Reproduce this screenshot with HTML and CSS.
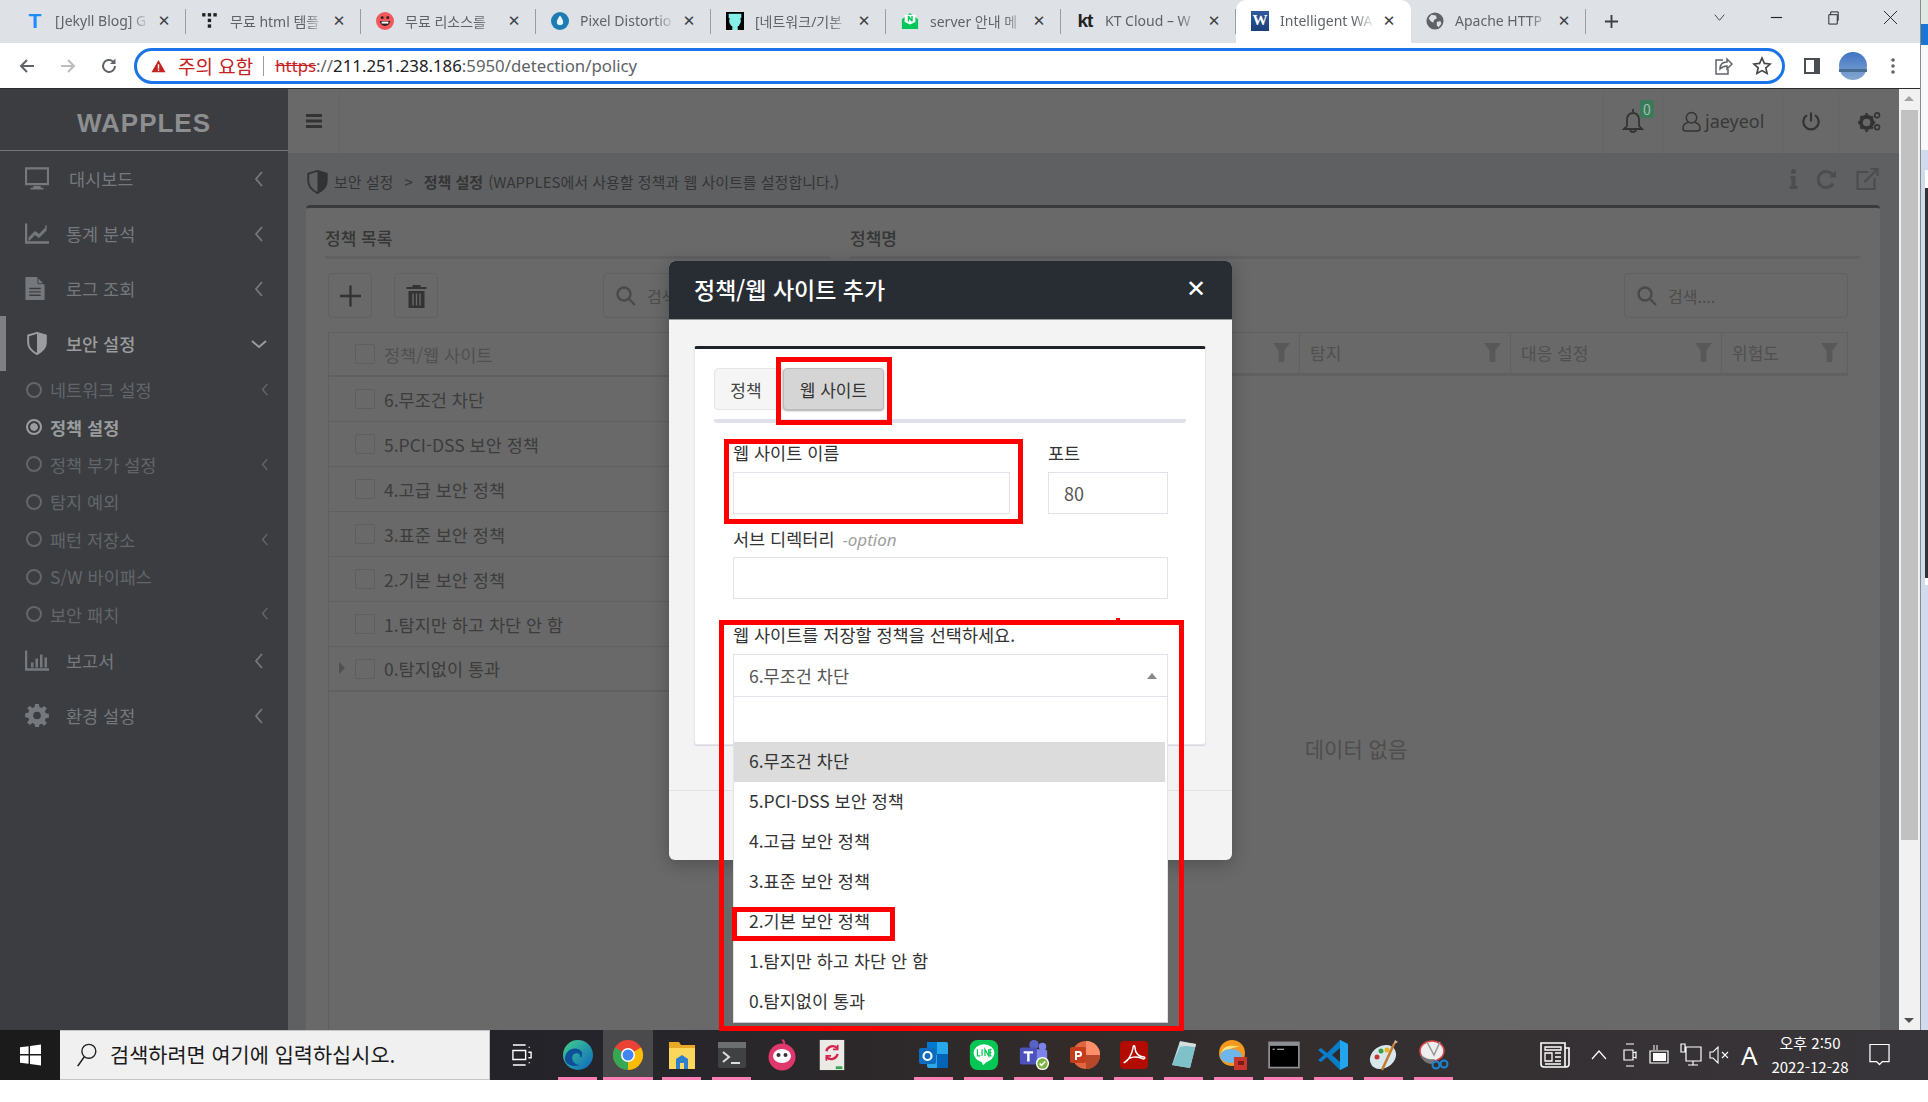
FILE: index.html
```html
<!DOCTYPE html>
<html lang="ko">
<head>
<meta charset="utf-8">
<title>WAPPLES</title>
<link rel="stylesheet" href="styles.css">
</head>
<body>
<div class="screen">
  <div class="desktop">
    <div class="browser">
      <div class="tabstrip">
        <div class="tab sep"><span class="fav fav-t">T</span><span class="tab-title">[Jekyll Blog] G</span><span class="tab-x">✕</span></div>
        <div class="tab sep"><svg class="fav" viewBox="0 0 16 16"><g fill="#222"><rect x="1" y="1" width="3" height="3"/><rect x="6" y="1" width="3" height="3"/><rect x="11" y="1" width="3" height="3"/><rect x="6" y="6" width="3" height="3"/><rect x="6" y="11" width="3" height="3"/></g></svg><span class="tab-title">무료 html 템플</span><span class="tab-x">✕</span></div>
        <div class="tab sep"><svg class="fav" viewBox="0 0 16 16"><circle cx="8" cy="8" r="8" fill="#f2585b"/><circle cx="5.500" cy="5" r="1.300" fill="#2a2020"/><circle cx="10.500" cy="5" r="1.300" fill="#2a2020"/><path d="M3.500 8h9a4.500 4.500 0 0 1-9 0z" fill="#2a2020"/><path d="M5 8.500h6v1.800H5z" fill="#fff"/></svg><span class="tab-title">무료 리소스를</span><span class="tab-x">✕</span></div>
        <div class="tab sep"><svg class="fav" viewBox="0 0 20 20"><circle cx="10" cy="10" r="10" fill="#1f7cb3"/><path d="M10 4c2 3 3.500 5 3.500 7a3.500 3.500 0 0 1-7 0c0-2 1.500-4 3.500-7z" fill="#e8f4fb"/></svg><span class="tab-title">Pixel Distortio</span><span class="tab-x">✕</span></div>
        <div class="tab sep"><svg class="fav" viewBox="0 0 20 20"><rect width="20" height="20" fill="#000"/><circle cx="10" cy="10" r="6.500" fill="#86f0e8"/><rect x="3" y="2" width="14" height="5" fill="#86f0e8"/><rect x="7" y="15" width="6" height="5" fill="#86f0e8"/></svg><span class="tab-title">[네트워크/기본</span><span class="tab-x">✕</span></div>
        <div class="tab sep"><svg class="fav" viewBox="0 0 20 20"><path d="M1 8 10 1l9 7v11H1z" fill="#03c75a"/><path d="M4 3h12v8l-6 3-6-3z" fill="#fff"/><path d="M7.500 4.500h1.500l2.500 3v-3h1.500v6h-1.500l-2.500-3v3h-1.500z" fill="#03c75a"/></svg><span class="tab-title">server 안내 메</span><span class="tab-x">✕</span></div>
        <div class="tab sep"><span class="fav fav-kt">kt</span><span class="tab-title">KT Cloud – W</span><span class="tab-x">✕</span></div>
        <div class="tab active"><span class="fav fav-w">W</span><span class="tab-title">Intelligent WA</span><span class="tab-x">✕</span></div>
        <div class="tab sep"><svg class="fav" viewBox="0 0 20 20"><circle cx="10" cy="10" r="9.500" fill="#5f6368"/><path d="M6 3l5 1 1 3-3 2-1 3-3-2-2-3zM12 11l4-1 1 3-3 4-2-2z" fill="#dee1e6"/></svg><span class="tab-title">Apache HTTP</span><span class="tab-x">✕</span></div>
        <svg class="newtab" viewBox="0 0 16 16"><path d="M8 1v14M1 8h14" stroke="#3c4043" stroke-width="2"/></svg>
        <div class="winctl">
          <svg viewBox="0 0 16 16"><path d="M3 5l5 6 5-6" fill="none" stroke="#3c4043"/></svg>
          <svg viewBox="0 0 16 16"><path d="M2 8h12" stroke="#222" stroke-width="1.200"/></svg>
          <svg viewBox="0 0 16 16"><path d="M3 5h9v10H3zM5 5V2h8v9h-1" fill="none" stroke="#222"/></svg>
          <svg viewBox="0 0 16 16"><path d="M1 1l14 14M15 1 1 15" stroke="#222"/></svg>
        </div>
      </div>
      <div class="toolbar">
        <svg class="tb-ico" viewBox="0 0 18 18"><path d="M16 9H3M9 3 3 9l6 6" fill="none" stroke="#5f6368" stroke-width="2"/></svg>
        <svg class="tb-ico" viewBox="0 0 18 18"><path d="M2 9h13M9 3l6 6-6 6" fill="none" stroke="#bdbdbd" stroke-width="2"/></svg>
        <svg class="tb-ico" viewBox="0 0 18 18"><path d="M15 9a6 6 0 1 1-2-4.500" fill="none" stroke="#5f6368" stroke-width="2"/><path d="M15.500 1.500v5.500H10z" fill="#5f6368"/></svg>
        <div class="omnibox">
          <svg class="warn" viewBox="0 0 16 16"><path d="M8 1 16 15H0z" fill="#c5221f"/><path d="M7.200 6h1.600v5H7.200zM7.200 12h1.600v1.600H7.200z" fill="#fff"/></svg>
          <span class="warn-text">주의 요함</span>
          <span class="url"><s class="url-https">https</s><span class="url-slash">://</span><span class="url-host">211.251.238.186</span>:5950/detection/policy</span>
          <svg class="omni-ico omni-share" viewBox="0 0 20 20"><path d="M10 4H3v14h12v-5" fill="none" stroke="#5f6368" stroke-width="1.500"/><path d="M7 13c0-5 3-7 7-7V3l5 5-5 5v-3c-3 0-5 1-7 3z" fill="none" stroke="#5f6368" stroke-width="1.500"/></svg>
          <svg class="omni-ico" viewBox="0 0 20 20"><path d="M10 2l2.400 5.400 5.800.6-4.400 3.800 1.300 5.700L10 14.600l-5.100 2.900 1.300-5.700L1.800 8l5.800-.6z" fill="none" stroke="#444" stroke-width="1.600"/></svg>
        </div>
        <svg class="tb-panel" viewBox="0 0 18 18"><path d="M2 2h14v14H2z" fill="none" stroke="#4a4d52" stroke-width="2"/><path d="M11 2h5v14h-5z" fill="#4a4d52"/></svg>
        <svg class="tb-avatar" viewBox="0 0 28 28"><defs><linearGradient id="sky" x1="0" y1="0" x2="0" y2="1"><stop offset="0" stop-color="#3f74c4"/><stop offset="1" stop-color="#86a8d0"/></linearGradient></defs><circle cx="14" cy="14" r="14" fill="url(#sky)"/><path d="M0 17h28v3H0z" fill="#4a6d96"/></svg>
        <svg class="tb-dots" viewBox="0 0 6 18"><circle cx="3" cy="3" r="1.800" fill="#5f6368"/><circle cx="3" cy="9" r="1.800" fill="#5f6368"/><circle cx="3" cy="15" r="1.800" fill="#5f6368"/></svg>
      </div>
      <div class="page">
        <aside class="sidebar">
          <div class="logo">WAPPLES</div>
          <nav class="menu">
            <div class="mi"><svg class="mi-ico" viewBox="0 0 26 24"><path d="M1 1h24v17H1z" fill="none" stroke="#75797d" stroke-width="2.500"/><path d="M9 20h8v2h3v2H6v-2h3z" fill="#75797d"/></svg><span class="mi-text mi-text-wide">대시보드</span><svg class="chev"><use href="#chev-l"/></svg></div>
            <div class="mi"><svg class="mi-ico" viewBox="0 0 24 20"><path d="M1 0v19h23" fill="none" stroke="#75797d" stroke-width="2.500"/><path d="M4 14l6-6 4 3 7-7v-2 5l-7 7-4-3-6 6z" fill="#75797d" stroke="#75797d"/></svg><span class="mi-text">통계 분석</span><svg class="chev"><use href="#chev-l"/></svg></div>
            <div class="mi"><svg class="mi-ico mi-doc" viewBox="0 0 20 24"><path d="M0 0h12l8 8v16H0z" fill="#75797d"/><path d="M4 12h12M4 15.500h12M4 19h12" stroke="#3c3d40" stroke-width="1.400"/><path d="M13 0v7h7" fill="none" stroke="#3c3d40"/></svg><span class="mi-text">로그 조회</span><svg class="chev"><use href="#chev-l"/></svg></div>
            <div class="mi mi-open"><svg class="mi-ico" viewBox="0 0 24 26"><path d="M12 1l10 3v8c0 6-4 10-10 13C6 22 2 18 2 12V4z" fill="none" stroke="#9a9c9e" stroke-width="2.200"/><path d="M12 1l10 3v8c0 6-4 10-10 13z" fill="#9a9c9e"/></svg><span class="mi-text">보안 설정</span><svg class="chev chev-down"><use href="#chev-d"/></svg></div>
            <div class="sub"><i class="dot"></i><span class="sub-text">네트워크 설정</span><svg class="chev-s"><use href="#chev-l"/></svg></div>
            <div class="sub sub-on"><i class="dot"></i><span class="sub-text">정책 설정</span></div>
            <div class="sub"><i class="dot"></i><span class="sub-text">정책 부가 설정</span><svg class="chev-s"><use href="#chev-l"/></svg></div>
            <div class="sub"><i class="dot"></i><span class="sub-text">탐지 예외</span></div>
            <div class="sub"><i class="dot"></i><span class="sub-text">패턴 저장소</span><svg class="chev-s"><use href="#chev-l"/></svg></div>
            <div class="sub"><i class="dot"></i><span class="sub-text">S/W 바이패스</span></div>
            <div class="sub"><i class="dot"></i><span class="sub-text">보안 패치</span><svg class="chev-s"><use href="#chev-l"/></svg></div>
            <div class="mi"><svg class="mi-ico" viewBox="0 0 24 20"><path d="M1 0v19h23" fill="none" stroke="#75797d" stroke-width="2.500"/><path d="M6 12h2.500v5H6zM10.500 8H13v9h-2.500zM15 4h2.500v13H15zM19.500 7H22v10h-2.500z" fill="#75797d"/></svg><span class="mi-text">보고서</span><svg class="chev"><use href="#chev-l"/></svg></div>
            <div class="mi"><svg class="mi-ico" viewBox="0 0 24 24"><path d="M10 0h4l.6 3.200 2.200.9L19.500 2l2.800 2.800-2.100 2.700.9 2.200 3.300.6v4l-3.300.6-.9 2.200 2.100 2.700-2.800 2.800-2.700-2.100-2.200.9L14 24h-4l-.6-3.200-2.200-.9L4.500 22l-2.800-2.800 2.100-2.700-.9-2.200L-.4 13.700v-4l3.300-.6.9-2.200L1.700 4.300 4.500 2l2.700 2.100 2.200-.9z" fill="#75797d"/><circle cx="12" cy="12" r="4" fill="#3c3d40"/></svg><span class="mi-text">환경 설정</span><svg class="chev"><use href="#chev-l"/></svg></div>
          </nav>
        </aside>
        <div class="main">
          <header class="topnav">
            <div class="nav-cell nav-burger"><svg class="burger" viewBox="0 0 16 14"><path d="M0 0h16v3H0zM0 5.500h16v3H0zM0 11h16v3H0z" fill="#333"/></svg></div>
            <div class="nav-space"></div>
            <div class="nav-cell nav-bell"><svg class="bell" viewBox="0 0 22 26"><path d="M11 1v3M5 18V11a6 6 0 0 1 12 0v7l3 3H2zM8 21a3 3 0 0 0 6 0" fill="none" stroke="#333" stroke-width="1.800"/></svg><span class="badge">0</span></div>
            <div class="nav-cell nav-user"><svg class="user" viewBox="0 0 20 22"><circle cx="10" cy="7" r="5.500" fill="none" stroke="#333" stroke-width="1.500"/><path d="M6 12C3 13 1 15 1 18c0 2 1 3 3 3h12c2 0 3-1 3-3 0-3-2-5-5-6" fill="none" stroke="#333" stroke-width="1.500"/></svg><span class="username">jaeyeol</span></div>
            <div class="nav-cell nav-power"><svg class="power" viewBox="0 0 20 22"><path d="M10 1v10" stroke="#333" stroke-width="2.400"/><path d="M5.500 4A8.500 8.500 0 1 0 14.500 4" fill="none" stroke="#333" stroke-width="2.400"/></svg></div>
            <div class="nav-cell nav-gear"><svg class="gears" viewBox="0 0 24 22"><circle cx="9" cy="12" r="6" fill="none" stroke="#333" stroke-width="4"/><path d="M9 2v3M9 19v3M0 12h3M15 12h3M2.500 5.500l2 2M13.500 16.500l2 2M15.500 5.500l-2 2M4.500 16.500l-2 2" stroke="#333" stroke-width="2.500"/><circle cx="20" cy="4.500" r="2.500" fill="none" stroke="#333" stroke-width="1.700"/><circle cx="20" cy="17" r="2.500" fill="none" stroke="#333" stroke-width="1.700"/></svg></div>
          </header>
          <div class="content">
            <div class="crumb">
              <svg class="crumb-shield" viewBox="0 0 24 26"><path d="M12 1l10 3v8c0 6-4 10-10 13C6 22 2 18 2 12V4z" fill="none" stroke="#333" stroke-width="2"/><path d="M12 1l10 3v8c0 6-4 10-10 13z" fill="#333"/></svg>
              <span class="crumb-a">보안 설정</span><span class="crumb-gt">&gt;</span><b class="crumb-b">정책 설정</b><span class="crumb-c">(WAPPLES에서 사용할 정책과 웹 사이트를 설정합니다.)</span>
              <div class="crumb-tools">
                <svg class="crumb-i" viewBox="0 0 8 20"><circle cx="4" cy="2.500" r="2.500" fill="#4c4d4f"/><path d="M1 7h5v10h2v3H0v-3h2v-7H1z" fill="#4c4d4f"/></svg>
                <svg class="crumb-r" viewBox="0 0 20 20"><path d="M16 6a8 8 0 1 0 0 8" fill="none" stroke="#4c4d4f" stroke-width="3"/><path d="M19 1v7h-7z" fill="#4c4d4f"/></svg>
                <svg class="crumb-e" viewBox="0 0 22 22"><path d="M12 4H1v17h17V10" fill="none" stroke="#4c4d4f" stroke-width="2.200"/><path d="M8 14 20 2M14 1h7v7" fill="none" stroke="#4c4d4f" stroke-width="2.200"/></svg>
              </div>
            </div>
            <section class="card">
              <div class="col col-left">
                <h3 class="col-title">정책 목록</h3>
                <div class="tools">
                  <div class="tool-btn"><svg viewBox="0 0 24 24"><path d="M12 0v24M0 12h24" stroke="#333" stroke-width="2.600"/></svg></div>
                  <div class="tool-btn"><svg viewBox="0 0 20 24"><path d="M6 1h8v2h6v2H0V3h6zM2 7h16v17H2z" fill="#333"/><path d="M6.500 9.500v12M10 9.500v12M13.500 9.500v12" stroke="#696969" stroke-width="1.400"/></svg></div>
                  <div class="search search-left"><svg class="search-ico" viewBox="0 0 20 20"><circle cx="8" cy="8" r="6.500" fill="none" stroke="#4a4a4a" stroke-width="2.400"/><path d="m13 13 6 6" stroke="#4a4a4a" stroke-width="2.400"/></svg><span class="search-ph">검색....</span></div>
                </div>
                <div class="tree">
                  <div class="tree-row tree-head"><i class="check"></i><span class="head-text">정책/웹 사이트</span></div>
                  <div class="tree-row"><i class="check"></i><span>6.무조건 차단</span></div>
                  <div class="tree-row"><i class="check"></i><span>5.PCI-DSS 보안 정책</span></div>
                  <div class="tree-row"><i class="check"></i><span>4.고급 보안 정책</span></div>
                  <div class="tree-row"><i class="check"></i><span>3.표준 보안 정책</span></div>
                  <div class="tree-row"><i class="check"></i><span>2.기본 보안 정책</span></div>
                  <div class="tree-row"><i class="check"></i><span>1.탐지만 하고 차단 안 함</span></div>
                  <div class="tree-row tree-last"><i class="caret"></i><i class="check"></i><span>0.탐지없이 통과</span></div>
                </div>
              </div>
              <div class="col col-right">
                <h3 class="col-title">정책명</h3>
                <div class="tools tools-right">
                  <div class="search search-right"><svg class="search-ico" viewBox="0 0 20 20"><circle cx="8" cy="8" r="6.500" fill="none" stroke="#4a4a4a" stroke-width="2.400"/><path d="m13 13 6 6" stroke="#4a4a4a" stroke-width="2.400"/></svg><span class="search-ph">검색....</span></div>
                </div>
                <div class="grid-head">
                  <div class="gh gh-a"><svg class="funnel"><use href="#funnel"/></svg></div>
                  <div class="gh"><span>탐지</span><svg class="funnel"><use href="#funnel"/></svg></div>
                  <div class="gh"><span>대응 설정</span><svg class="funnel"><use href="#funnel"/></svg></div>
                  <div class="gh gh-d"><span>위험도</span><svg class="funnel"><use href="#funnel"/></svg></div>
                </div>
                <div class="grid-empty">데이터 없음</div>
              </div>
            </section>
          </div>
        </div>
        <div class="scrollbar">
          <i class="sb-up"></i>
          <div class="sb-track"><div class="sb-thumb"></div></div>
          <i class="sb-down"></i>
        </div>
      </div>
    </div>
    <div class="behind">
      <div class="b-globe"></div>
      <div class="b-blue"></div>
      <div class="b-white"></div>
      <div class="b-pale"><div class="b-panel"></div></div>
    </div>
  </div>
  <div class="taskbar">
    <div class="start"><svg viewBox="0 0 22 22"><path d="M0 3l9-1.200V10H0zM10.500 1.500 22 0v10H10.500zM0 11.500h9v8.700L0 19zM10.500 11.500H22V22l-11.500-1.600z" fill="#fff"/></svg></div>
    <div class="tb-search"><svg viewBox="0 0 24 28"><circle cx="14" cy="10" r="7.500" fill="none" stroke="#222" stroke-width="1.500"/><path d="M9 16 2 26" stroke="#222" stroke-width="1.800"/></svg><span class="tb-search-text">검색하려면 여기에 입력하십시오.</span></div>
    <div class="tk tk-view"><svg viewBox="0 0 22 24"><path d="M1 1h14M1 23h14M1 7h14v10H1zM18 9h3v6h-3M19 3v1M19 20v1" fill="none" stroke="#fff" stroke-width="1.500"/></svg></div>
    <div class="tk tk-pink"><svg viewBox="0 0 32 32"><defs><linearGradient id="edge" x1="0" y1="0" x2="1" y2="1"><stop offset="0" stop-color="#43d08b"/><stop offset="1" stop-color="#0b66c2"/></linearGradient></defs><circle cx="16" cy="16" r="15" fill="url(#edge)"/><path d="M3 20c0-9 9-13 15-9 4 3 2 8 0 7 1-3-3-5-6-3-4 3-1 11 6 11-7 3-15-1-15-6z" fill="#0e4f9a"/></svg></div>
    <div class="tk tk-on tk-pink"><svg viewBox="0 0 32 32"><circle cx="16" cy="16" r="15" fill="#ea4335"/><path d="M16 16 3 8.500A15 15 0 0 0 16 31z" fill="#34a853"/><path d="M16 16v15A15 15 0 0 0 29 8.500z" fill="#fbbc04"/><circle cx="16" cy="16" r="7" fill="#fff"/><circle cx="16" cy="16" r="5.500" fill="#4285f4"/></svg></div>
    <div class="tk tk-pink tk-files"><svg viewBox="0 0 32 32"><path d="M3 3h10l2 3h14v24H3z" fill="#e9a825"/><path d="M3 9h26v21H3z" fill="#fbd75b"/><path d="M10 30V20l6-4 6 4v10h-4v-6h-4v6z" fill="#2f7fd1"/></svg></div>
    <div class="tk tk-pink"><svg viewBox="0 0 32 32"><rect x="2" y="3" width="28" height="26" rx="2" fill="#3f4143"/><rect x="2" y="3" width="28" height="6" fill="#6c6e70"/><path d="m7 13 6 5-6 5" fill="none" stroke="#ddd" stroke-width="2"/><path d="M15 24h9" stroke="#ddd" stroke-width="2"/></svg></div>
    <div class="tk"><svg viewBox="0 0 32 32"><path d="M16 1a3 3 0 0 1 2 4" stroke="#e8336f" stroke-width="2" fill="none"/><circle cx="16" cy="18" r="13.500" fill="#e0376c"/><ellipse cx="16" cy="17" rx="9" ry="7" fill="#fff"/><circle cx="12.500" cy="16" r="2" fill="#333"/><circle cx="19.500" cy="16" r="2" fill="#333"/></svg></div>
    <div class="tk"><svg viewBox="0 0 28 34"><rect x="1" y="1" width="26" height="32" fill="#eceae4"/><path d="M8 13a7 7 0 0 1 12-3M20 16a7 7 0 0 1-12 3" fill="none" stroke="#d3244f" stroke-width="2.500"/><path d="M20 6v5h-5M8 23v-5h5" fill="none" stroke="#d3244f" stroke-width="1.800"/><rect x="18" y="29" width="7" height="3" fill="#3aa655"/></svg></div>
    <div class="tk tk-gap"></div>
    <div class="tk tk-pink"><svg viewBox="0 0 32 32"><rect x="9" y="3" width="21" height="26" rx="2" fill="#28a8ea"/><rect x="9" y="3" width="10" height="13" fill="#0078d4"/><rect x="19" y="15" width="11" height="14" fill="#0364b8"/><rect x="1" y="9" width="17" height="16" rx="2" fill="#0f6cbd"/><circle cx="9.500" cy="17" r="4" fill="none" stroke="#fff" stroke-width="2.200"/></svg></div>
    <div class="tk tk-pink"><svg viewBox="0 0 32 34"><rect x="1" y="1" width="30" height="32" rx="8" fill="#06c755"/><ellipse cx="16" cy="15" rx="11" ry="9.500" fill="#fff"/><path d="M13 23l2 5 5-5z" fill="#fff"/><path d="M9 11v7h3M14 11v7M17 18v-7l4 7v-7M24 11h-1.500v7H24M22.500 14.500H24" fill="none" stroke="#06c755" stroke-width="1.300"/></svg></div>
    <div class="tk tk-pink"><svg viewBox="0 0 32 34"><circle cx="25" cy="8" r="4" fill="#7b83eb"/><circle cx="16" cy="6" r="5" fill="#5a62c3"/><rect x="13" y="11" width="17" height="15" rx="3" fill="#7b83eb"/><rect x="1" y="9" width="18" height="18" rx="2" fill="#4b53bc"/><path d="M5 13h10v2.500h-3.700V24H8.700v-8.500H5z" fill="#fff"/><circle cx="25" cy="26" r="7" fill="#fff"/><circle cx="25" cy="26" r="5.500" fill="#7cb342"/><path d="m22 26 2 2 4-4" fill="none" stroke="#fff" stroke-width="1.600"/></svg></div>
    <div class="tk tk-pink"><svg viewBox="0 0 32 32"><circle cx="18" cy="16" r="14" fill="#e0663f"/><path d="M18 2a14 14 0 0 1 14 14H18z" fill="#ff8f6b"/><path d="M18 16h14a14 14 0 0 1-14 14z" fill="#b7472a"/><rect x="2" y="8" width="16" height="16" rx="2" fill="#c43e1c"/><path d="M7 12h4a3 3 0 0 1 0 6H9v3H7zm2 2v2h2a1 1 0 0 0 0-2z" fill="#fff"/></svg></div>
    <div class="tk tk-pink"><svg viewBox="0 0 32 32"><rect x="2" y="2" width="28" height="28" rx="4" fill="#b30b00"/><path d="M7 23c3-1 7-8 8-14 0-3 2-3 2 0 0 5 4 9 9 9 2 1 0 3-3 1-5-2-11-1-14 2-2 3-4 3-2 2z" fill="none" stroke="#fff" stroke-width="1.500"/></svg></div>
    <div class="tk tk-pink"><svg viewBox="0 0 32 32"><path d="M12 2l16 3-6 24L4 26z" fill="#b9dbe0"/><path d="M4 26 12 8l16-3-6 24z" fill="#7fc1c9"/><path d="M12 3l16 2-1 3-16-2z" fill="#ddd"/></svg></div>
    <div class="tk tk-pink"><svg viewBox="0 0 32 32"><circle cx="14" cy="14" r="13" fill="#f39a1e"/><path d="M3 14C5 7 13 5 22 8 15 8 8 10 6 18z" fill="#fde27a"/><ellipse cx="13" cy="17" rx="11" ry="7" fill="#6fb7ea"/><rect x="16" y="18" width="13" height="13" fill="#c9362e"/><rect x="20" y="22" width="6" height="4" fill="#7a1b15"/></svg></div>
    <div class="tk tk-pink"><svg viewBox="0 0 28 24"><rect x="1" y="1" width="26" height="22" fill="#000" stroke="#8d8f92" stroke-width="1.500"/><rect x="1" y="1" width="26" height="3" fill="#8d8f92"/><path d="M4 7h2M8 7h6" stroke="#ccc" stroke-width="1"/></svg></div>
    <div class="tk tk-pink"><svg viewBox="0 0 32 32"><path d="M22 1 9 14 3 9 0 11l6 5-6 5 3 2 6-5 13 13 8-4V5z" fill="#0a7dc8"/><path d="M22 1v30l8-4V5z" fill="#22a5ed"/><path d="M22 9v14l-8-7z" fill="#2d2b2e"/></svg></div>
    <div class="tk tk-pink"><svg viewBox="0 0 32 32"><ellipse cx="15" cy="18" rx="14" ry="11" fill="#d8e6ee" transform="rotate(-35 15 18)"/><circle cx="9" cy="18" r="2.500" fill="#c9362e"/><circle cx="13" cy="12" r="2.500" fill="#3c9e4b"/><circle cx="19" cy="11" r="2.500" fill="#e6b422"/><path d="M14 31 26 5" stroke="#c47a2c" stroke-width="2.500"/><path d="M25 6l2-5 3 2z" fill="#d9b48a"/></svg></div>
    <div class="tk tk-pink"><svg viewBox="0 0 32 32"><ellipse cx="14" cy="12" rx="12" ry="10" fill="#eee" stroke="#d54545" stroke-width="1.600"/><path d="M2 15c3 4 10 6 15 5l-3 5C8 25 3 20 2 15z" fill="#777"/><path d="m9 3 7 13 6-13" fill="none" stroke="#999" stroke-width="1.500"/><circle cx="18" cy="26" r="3.500" fill="none" stroke="#1a87d6" stroke-width="2"/><circle cx="26" cy="25" r="3.500" fill="none" stroke="#1a87d6" stroke-width="2"/></svg></div>
    <div class="tray">
      <svg class="t-news" viewBox="0 0 30 26"><path d="M1 1h24v24H4a3 3 0 0 1-3-3zM25 6h4v16a3 3 0 0 1-3 3h-1" fill="none" stroke="#fff" stroke-width="1.600"/><path d="M5 5h16v3H5zM5 11h7v8H5zM15 11h6M15 15h6M15 19h6M5 22h16" fill="none" stroke="#fff" stroke-width="1.300"/></svg>
      <svg class="t-up" viewBox="0 0 16 10"><path d="M1 9l7-8 7 8" fill="none" stroke="#fff" stroke-width="1.200"/></svg>
      <svg class="t-cam" viewBox="0 0 14 24"><path d="M3 1h8M3 23h8M1 7h9v10H1zM10 10l3-1v6l-3-1" fill="none" stroke="#fff" stroke-width="1.200"/></svg>
      <svg class="t-bat" viewBox="0 0 20 22"><path d="M1 7h18v12H1z" fill="none" stroke="#fff" stroke-width="1.200"/><path d="M4 9h13v8H4z" fill="#fff"/><path d="M5 1v5M8 1v5" stroke="#fff"/></svg>
      <svg class="t-net" viewBox="0 0 22 24"><path d="M6 4h15v14H6zM5 1H1v8h4zM13 18v4M8 22h10" fill="none" stroke="#fff" stroke-width="1.200"/></svg>
      <svg class="t-vol" viewBox="0 0 20 20"><path d="M1 7h3l5-5v16l-5-5H1z" fill="none" stroke="#fff" stroke-width="1.100"/><path d="m13 7 6 6M19 7l-6 6" stroke="#fff" stroke-width="1.100"/></svg>
      <span class="t-ime">A</span>
      <div class="t-clock"><span>오후 2:50</span><span>2022-12-28</span></div>
      <svg class="t-note" viewBox="0 0 22 24"><path d="M1 1h20v18h-7l-3 3-3-3H1z" fill="none" stroke="#fff" stroke-width="1.300"/></svg>
    </div>
  </div>

  <div class="modal">
    <div class="modal-head"><span class="modal-title">정책/웹 사이트 추가</span><span class="modal-close">✕</span></div>
    <div class="modal-body">
      <div class="form-card">
        <div class="tabs">
          <div class="mtab">정책</div>
          <div class="mtab mtab-on">웹 사이트</div>
        </div>
        <div class="form">
          <div class="form-row">
            <div class="field field-name"><label class="lbl">웹 사이트 이름</label><div class="input"></div></div>
            <div class="field field-port"><label class="lbl">포트</label><div class="input input-val">80</div></div>
          </div>
          <div class="field"><label class="lbl lbl-tight">서브 디렉터리 <em class="opt">-option</em></label><div class="input"></div></div>
          <div class="field">
            <label class="lbl">웹 사이트를 저장할 정책을 선택하세요.</label>
            <div class="select"><span>6.무조건 차단</span><i class="sel-arrow"></i></div>
            <div class="dropdown">
              <div class="dd-search"></div>
              <div class="dd-item dd-on">6.무조건 차단</div>
              <div class="dd-item">5.PCI-DSS 보안 정책</div>
              <div class="dd-item">4.고급 보안 정책</div>
              <div class="dd-item">3.표준 보안 정책</div>
              <div class="dd-item">2.기본 보안 정책</div>
              <div class="dd-item">1.탐지만 하고 차단 안 함</div>
              <div class="dd-item">0.탐지없이 통과</div>
            </div>
          </div>
        </div>
      </div>
    </div>
    <div class="modal-foot"></div>
  </div>

  <div class="mark mark-tab"></div>
  <div class="mark mark-name"></div>
  <div class="mark mark-select"></div>
  <div class="mark mark-item"></div>
  <div class="mark-dot"></div>
</div>

<svg class="defs" aria-hidden="true">
  <symbol id="chev-l" viewBox="0 0 10 16"><path d="M8 1 2 8l6 7" fill="none" stroke="currentColor" stroke-width="1.800"/></symbol>
  <symbol id="chev-d" viewBox="0 0 16 10"><path d="M1 2l7 6 7-6" fill="none" stroke="currentColor" stroke-width="2"/></symbol>
  <symbol id="funnel" viewBox="0 0 18 20"><path d="M0 0h18l-6 8v12H6V8z" fill="#585858"/></symbol>
</svg>
</body>
</html>
```
FILE: styles.css
```css
* { box-sizing: border-box; }
html, body { margin: 0; padding: 0; background: #fff; }
body { font-family: "Noto Sans CJK KR", "Noto Sans", sans-serif; width: 1928px; height: 1102px; overflow: hidden; }
.defs { position: absolute; width: 0; height: 0; }

.screen { position: relative; width: 1928px; height: 1080px; display: flex; flex-direction: column; overflow: hidden; }
.desktop { display: flex; height: 1030px; flex: none; }
.browser { width: 1920px; display: flex; flex-direction: column; }

/* chrome tabs */
.tabstrip { height: 43px; background: #dee1e6; display: flex; align-items: center; padding-left: 11px; flex: none; }
.tab { position: relative; width: 175px; height: 43px; display: flex; align-items: center; padding: 0 0 2px 15px; font-family: "Noto Sans", "Noto Sans CJK KR", sans-serif; font-size: 14px; color: #5f6368; flex: none; }
.tab.sep::after { content: ""; position: absolute; right: 0; top: 9px; height: 25px; width: 1px; background: #9a9ea3; }
.tab.active { background: #fff; border-radius: 10px 10px 0 0; height: 43px; }
.fav { width: 18px; height: 18px; flex: none; display: flex; align-items: center; justify-content: center; }
.fav-t { color: #1a8cff; font: 700 21px "Liberation Sans", sans-serif; }
.fav-kt { color: #222; font: 700 19px "Liberation Sans", sans-serif; letter-spacing: -1px; }
.fav-w { background: linear-gradient(#2f5a9e, #1c3f78); color: #fff; font: 700 15px "Liberation Serif", serif; height: 20px; }
.tab-title { margin-left: 11px; width: 95px; overflow: hidden; white-space: nowrap; -webkit-mask-image: linear-gradient(to right, #000 78%, transparent 100%); mask-image: linear-gradient(to right, #000 78%, transparent 100%); }
.tab-x { margin-left: 6px; font: 700 15px "DejaVu Sans", sans-serif; color: #3c4043; width: 16px; text-align: center; }
.newtab { width: 15px; height: 15px; margin-left: 18px; flex: none; }
.winctl { margin-left: auto; display: flex; align-items: center; gap: 42px; padding-right: 22px; }
.winctl svg { width: 15px; height: 15px; margin-top: -8px; flex: none; }

/* chrome toolbar */
.toolbar { height: 45px; background: #fff; display: flex; align-items: center; flex: none; padding-left: 18px; }
.tb-ico { width: 18px; height: 18px; margin-right: 23px; flex: none; }
.omnibox { width: 1651px; margin-left: -7px; height: 36px; border: 3px solid #1a73e8; border-radius: 18px; display: flex; align-items: center; padding-left: 14px; flex: none; }
.warn { width: 15px; height: 14px; flex: none; }
.warn-text { color: #c5221f; font-size: 19px; margin-left: 12px; padding-right: 10px; border-right: 1px solid #9a9ea3; line-height: 20px; white-space: nowrap; }
.url { margin-left: 11px; font-family: "Noto Sans", sans-serif; font-size: 16.800px; color: #5f6368; white-space: nowrap; }
.url-https { color: #c5221f; }
.url-host { color: #202124; }
.omni-ico { width: 20px; height: 20px; margin-left: 19px; flex: none; }
.omni-share { margin-left: auto; }
.omnibox .omni-ico:last-child { margin-right: 10px; }
.tb-panel { width: 18px; height: 18px; margin-left: 18px; flex: none; }
.tb-avatar { width: 28px; height: 28px; margin-left: 18px; flex: none; }
.tb-dots { width: 6px; height: 18px; margin-left: 23px; flex: none; }

/* app page */
.page { flex: 1; display: flex; min-height: 0; border-top: 1px solid #2c2c2c; }
.sidebar { width: 288px; background: #3c3d40; flex: none; }
.logo { height: 62px; border-bottom: 1px solid #74767a; color: #8c8e90; font: 700 26px/68px "Liberation Sans", sans-serif; letter-spacing: 1px; text-align: center; }
.menu { color: #6f7377; }
.mi { height: 55px; display: flex; align-items: center; padding-left: 25px; font-size: 17.500px; position: relative; color: #75797d; }
.mi-ico { width: 24px; height: 23px; flex: none; }
.mi-doc { width: 20px; }
.mi-doc + .mi-text { margin-left: 21px; }
.mi-text { margin-left: 17px; }
.mi-text-wide { margin-left: 20px; }
.chev { width: 10px; height: 16px; position: absolute; left: 254px; top: 20px; color: #75797d; }
.chev-down { width: 16px; height: 10px; left: 251px; top: 23px; color: #9a9c9e; }
.mi-open { color: #9a9c9e; font-weight: 500; box-shadow: inset 6px 0 0 #7e8083; }
.sub { height: 37.400px; display: flex; align-items: center; padding-left: 26px; font-size: 17.500px; position: relative; color: #62666a; }
.dot { width: 16px; height: 16px; border: 2.500px solid #62666a; border-radius: 50%; flex: none; }
.sub-text { margin-left: 8px; }
.chev-s { width: 8px; height: 13px; position: absolute; left: 261px; top: 12px; color: #62666a; }
.sub-on { color: #9a9c9e; font-weight: 700; }
.sub-on .dot { border-color: #9a9c9e; background: radial-gradient(circle, #9a9c9e 0 3.500px, transparent 4px); }

.main { flex: 1; min-width: 0; display: flex; flex-direction: column; background: #5f6062; }
.topnav { height: 64px; background: #696969; display: flex; flex: none; align-items: stretch; }
.nav-cell { display: flex; align-items: center; justify-content: center; border-left: 1px solid #646464; position: relative; flex: none; }
.nav-burger { width: 52px; border-left: 0; border-right: 1px solid #646464; }
.burger { width: 16px; height: 14px; }
.nav-space { flex: 1; }
.nav-bell { width: 59px; }
.bell { width: 22px; height: 26px; }
.badge { position: absolute; left: 36px; top: 11px; width: 14px; height: 18px; background: #3a7a5a; color: #9fc0ae; font-size: 14px; line-height: 18px; text-align: center; border-radius: 2px; }
.nav-user { width: 120px; justify-content: flex-start; padding-left: 19px; }
.user { width: 19px; height: 21px; }
.username { margin-left: 4px; font-family: "Noto Sans", sans-serif; font-size: 18px; color: #383838; }
.nav-power { width: 56px; }
.power { width: 18px; height: 21px; }
.nav-gear { width: 61px; }
.gears { width: 23px; height: 21px; }

.content { flex: 1; min-height: 0; padding-left: 18px; padding-right: 19px; display: flex; flex-direction: column; }
.crumb { height: 52px; padding-top: 5px; display: flex; align-items: center; font-size: 15px; color: #353535; flex: none; }
.crumb-shield { width: 23px; height: 24px; margin-right: 5px; flex: none; }
.crumb-gt { margin: 0 11px 0 11px; }
.crumb-c { margin-left: 5px; }
.crumb-tools { margin-left: auto; display: flex; align-items: center; margin-top: -5px; }
.crumb-i { width: 9px; height: 20px; margin-right: 19px; }
.crumb-r { width: 20px; height: 21px; margin-right: 19px; }
.crumb-e { width: 23px; height: 22px; margin-right: 1px; }
.card { flex: 1; background: #696969; border-top: 3px solid #3a3b3e; border-radius: 4px 4px 0 0; display: flex; padding: 0 20px 0 19px; gap: 20px; min-height: 0; }
.col-left { width: 505px; flex: none; }
.col-right { flex: 1; min-width: 0; }
.col-title { margin: 0; box-sizing: content-box; height: 48px; line-height: 60px; font-size: 17px; font-weight: 500; color: #363636; border-bottom: 3px solid #616161; }
.tools { display: flex; height: 45px; margin-top: 14px; padding-left: 3px; gap: 22px; }
.tools-right { justify-content: flex-end; padding-right: 12px; }
.tool-btn { width: 44px; height: 45px; border: 1px solid #606060; border-radius: 4px; display: flex; align-items: center; justify-content: center; flex: none; }
.tool-btn svg { width: 21px; height: 24px; }
.search { height: 45px; border: 1px solid #606060; border-radius: 4px; display: flex; align-items: center; padding-left: 12px; color: #4c4c4c; font-size: 16px; flex: none; }
.search-left { margin-left: 143px; width: 220px; }
.search-right { width: 224px; }
.search-ico { width: 20px; height: 20px; flex: none; }
.search-ph { margin-left: 11px; }
.tree { margin: 14px 0 0 3px; border-left: 1px solid #5f5f5f; border-right: 1px solid #5f5f5f; height: 700px; }
.tree-row { height: 45px; display: flex; align-items: center; padding-left: 26px; border-bottom: 1px solid #606060; font-size: 17.500px; color: #3c3c3c; position: relative; }
.tree-head { border-top: 1px solid #606060; border-bottom-width: 2px; }
.head-text { color: #505050; }
.tree-last { border-bottom-width: 2px; }
.check { width: 20px; height: 20px; border: 1px solid #5e5e5e; border-radius: 2px; margin-right: 9px; flex: none; }
.caret { position: absolute; left: 10px; top: 15px; border-left: 6px solid #505050; border-top: 6px solid transparent; border-bottom: 6px solid transparent; }
.grid-head { margin: 14px 12px 0 0; display: grid; grid-template-columns: 1fr 211px 211px 126px; height: 44px; border-top: 1px solid #606060; border-bottom: 3px solid #606060; border-right: 1px solid #606060; }
.gh { position: relative; display: flex; align-items: center; padding: 0 0 2px 10px; border-left: 1px solid #606060; font-size: 17px; color: #505050; }
.gh-a { border-left: 0; }
.funnel { position: absolute; right: 9px; top: 10px; width: 17px; height: 19px; }
.grid-empty { text-align: center; font-size: 21px; line-height: 30px; color: #4e4e4e; padding-top: 357px; padding-right: 8px; margin-left: 10px; }

/* scrollbar */
.scrollbar { width: 21px; background: #f1f1f1; display: flex; flex-direction: column; flex: none; }
.sb-up { height: 21px; flex: none; position: relative; }
.sb-up::after { content: ""; position: absolute; left: 5px; top: 7px; border-left: 5px solid transparent; border-right: 5px solid transparent; border-bottom: 5px solid #a3a3a3; }
.sb-track { flex: 1; padding: 0 2px; }
.sb-thumb { height: 730px; background: #c1c1c1; }
.sb-down { height: 21px; flex: none; position: relative; }
.sb-down::after { content: ""; position: absolute; left: 5px; top: 9px; border-left: 5px solid transparent; border-right: 5px solid transparent; border-top: 5px solid #505050; }

/* window behind */
.behind { width: 8px; flex: none; display: flex; flex-direction: column; background: #d0dced; border-left: 1px solid #8a8a8a; }
.b-globe { height: 24px; background: #dfe8e2; }
.b-blue { height: 21px; background: #1976d2; }
.b-white { height: 105px; background: #f8f9fb; }
.b-pale { flex: 1; padding: 20px 0 0 4px; }
.b-panel { height: 415px; background: #333; border-top: 18px solid #fff; border-bottom: 7px solid #fff; }

/* taskbar */
.taskbar { height: 50px; flex: none; display: flex; align-items: center; background: linear-gradient(90deg, #1c1c1e 0, #24242a 30%, #322b2a 55%, #38353a 100%); color: #fff; }
.start { width: 60px; height: 50px; display: flex; align-items: center; justify-content: center; background: #1b1b1b; flex: none; }
.start svg { width: 21px; height: 22px; }
.tb-search { width: 430px; height: 50px; background: #f0f0f0; border: 1px solid #c4c4c4; border-width: 1px 1px 1px 0; display: flex; align-items: center; padding-left: 15px; color: #1a1a1a; font-size: 20.800px; flex: none; }
.tb-search svg { width: 24px; height: 26px; margin-right: 11px; flex: none; }
.tb-search-text { padding-bottom: 3px; }
.tk { width: 50px; height: 50px; display: flex; align-items: center; justify-content: center; position: relative; flex: none; }
.tk svg { width: 32px; height: 32px; }
.tk-view { width: 63px; }
.tk-view svg { width: 20px; height: 24px; }
.tk-on { background: #4a4a4d; }
.tk-files { margin-left: 4px; }
.tk-gap { width: 52px; }
.tk-pink::after { content: ""; position: absolute; left: 5px; right: 6px; bottom: 0; height: 3px; background: #fd7eb5; }
.tk-on.tk-pink::after { left: 0; right: 0; }
.tray { flex: 1; position: relative; display: flex; align-items: center; padding-left: 81px; }
.tray svg { flex: none; }
.t-news { width: 30px; height: 26px; }
.t-up { width: 16px; height: 10px; margin-left: 21px; }
.t-cam { width: 14px; height: 24px; margin-left: 16px; }
.t-bat { width: 20px; height: 22px; margin-left: 12px; }
.t-net { width: 22px; height: 24px; margin-left: 11px; }
.t-vol { width: 20px; height: 20px; margin-left: 7px; }
.t-ime { font: 400 26px "Noto Sans", sans-serif; margin-left: 12px; width: 16px; }
.t-clock { display: flex; flex-direction: column; align-items: center; font-size: 15px; line-height: 24px; margin-left: 8px; width: 90px; flex: none; }
.t-note { width: 21px; height: 24px; margin-left: 14px; }

/* modal */
.modal { position: absolute; left: 669px; top: 261px; width: 563px; height: 599px; background: #f3f3f3; border-radius: 6px; display: flex; flex-direction: column; box-shadow: 0 4px 18px rgba(0,0,0,.25); }
.modal-head { height: 59px; background: #282c33; border-radius: 6px 6px 0 0; display: flex; align-items: center; justify-content: space-between; padding: 0 26px 2px 25px; color: #fff; flex: none; border-bottom: 1px solid #9c9c9c; }
.modal-title { font-size: 23px; font-weight: 500; }
.modal-close { font: 700 24px "DejaVu Sans", sans-serif; }
.modal-body { height: 471px; padding: 26px 26px 26px 25px; flex: none; border-bottom: 1px solid #e2e2e2; }
.modal-foot { flex: 1; }
.form-card { background: #fff; height: 399px; border: 1px solid #e6e6ea; border-top: 3px solid #1f2329; border-radius: 3px; box-shadow: 0 1px 1px #d4d8e0; position: relative; }
.tabs { display: flex; margin: 19px 19px 0; height: 55px; border-bottom: 4px solid #dfe2ea; border-radius: 3px; padding-bottom: 9px; }
.mtab { width: 69px; height: 42px; border: 1px solid #e4e6ea; border-radius: 4px 0 0 4px; background: #f5f5f5; color: #444; font-size: 17px; padding-right: 5px; display: flex; align-items: center; justify-content: center; }
.mtab-on { width: 101px; background: #d5d5d5; border-color: #bcbcbc; border-radius: 4px; color: #333; box-shadow: 0 1px 2px #aaa; padding-right: 0; }
.form { padding: 18px 37px 0 38px; position: relative; }
.form-row { display: flex; gap: 38px; }
.field-name { width: 277px; }
.field-port { width: 120px; }
.lbl { display: block; height: 24px; line-height: 24px; font-size: 17.500px; color: #333; margin-bottom: 7px; white-space: nowrap; }
.lbl-tight { margin-bottom: 6px; }
.opt { color: #a0a0a0; font-family: "Noto Sans", sans-serif; font-size: 17px; margin-left: 3px; }
.input { height: 42px; border: 1px solid #e1e3ea; background: #fff; margin-bottom: 13px; }
.input-val { padding-left: 15px; line-height: 40px; font-size: 18px; color: #555; }
.field { position: relative; }
.form > .field:last-child { margin-top: 24px; }
.select { height: 43px; border: 1px solid #e1e3ea; display: flex; align-items: center; padding-left: 15px; font-size: 17.500px; color: #555; position: relative; background: #fff; }
.sel-arrow { position: absolute; right: 10px; top: 18px; border-left: 5px solid transparent; border-right: 5px solid transparent; border-bottom: 6px solid #888; }
.dropdown { position: absolute; left: 0; right: 0; top: 74px; height: 326px; background: #fff; border: 1px solid #e1e3ea; border-top: 0; border-bottom: 1px solid #c9ccd3; z-index: 2; }
.dd-search { height: 45px; }
.dd-item { height: 40px; line-height: 38px; padding-left: 15px; font-size: 17.500px; color: #333; white-space: nowrap; }
.dd-on { background: #dcdcdc; margin-right: 2px; }

/* red annotations */
.mark { position: absolute; border: 5px solid #ff0000; z-index: 3; }
.mark-tab { left: 776px; top: 357px; width: 116px; height: 68px; }
.mark-name { left: 724px; top: 439px; width: 299px; height: 85px; }
.mark-select { left: 719px; top: 620px; width: 465px; height: 411px; }
.mark-item { left: 732px; top: 907px; width: 163px; height: 34px; }
.mark-dot { position: absolute; left: 1116px; top: 618px; width: 4px; height: 3px; background: #ff0000; z-index: 3; }
```
